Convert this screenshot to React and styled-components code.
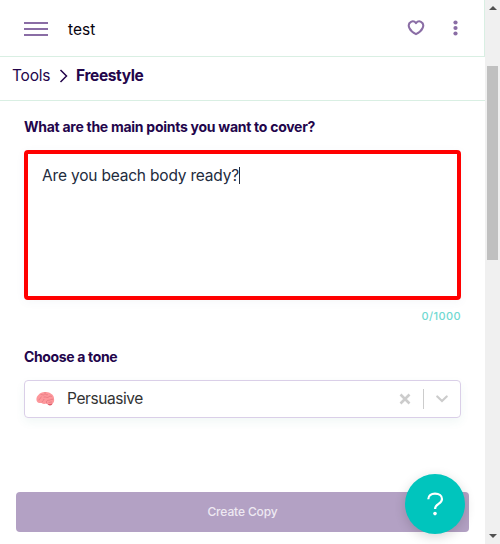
import React from "react";
import styled, { createGlobalStyle } from "styled-components";

const Global = createGlobalStyle`
  * { box-sizing: border-box; }
  html, body { margin: 0; padding: 0; background: #fff; overflow: hidden; }
  body { font-family: Inter, "Liberation Sans", sans-serif; color: #23054b; }
  button { font-family: inherit; border: 0; padding: 0; background: none; }
  svg { display: block; flex: none; }
`;

const Window = styled.div`
  position: relative;
  display: flex;
  width: 500px;
  height: 544px;
  overflow: hidden;
`;
const Page = styled.main`
  width: 485px;
  display: flex;
  flex-direction: column;
`;
const Text = styled.span`
  display: block;
  white-space: nowrap;
  font-size: ${(p) => p.$size || 16}px;
  font-weight: ${(p) => p.$weight || 400};
  letter-spacing: ${(p) => p.$spacing || 0}px;
  line-height: 20px;
  color: ${(p) => p.$color || "inherit"};
`;
const Title = styled(Text)`
  padding-top: 2px;
`;
const Header = styled.header`
  display: flex;
  align-items: center;
  height: 57px;
  padding: 2px 26px 0 24px;
  border-right: 1px solid #d9efe3;
  border-bottom: 1px solid #d9efe3;
`;
const MenuButton = styled.button`
  margin-right: 20px;
`;
const HeaderActions = styled.div`
  display: flex;
  align-items: center;
  gap: 27px;
  margin-left: auto;
  height: 24px;
  margin-top: -3px;
`;
const Breadcrumb = styled.nav`
  display: flex;
  align-items: center;
  height: 44px;
  padding: 0 12px 5px;
  border-bottom: 1px solid #d9efe3;
`;
const Chevron = styled.svg`
  margin: 0 7px 0 10px;
`;
const CrumbLink = styled.div`
  width: 37px;
`;
const Form = styled.section`
  display: flex;
  flex-direction: column;
  padding: 16px 24px 0;
`;
const TextArea = styled.div`
  display: flex;
  align-items: flex-start;
  height: 150px;
  margin-top: 13px;
  padding: 12px 14px;
  border: 4px solid #f00;
  border-radius: 4px;
  box-shadow: 0 2px 10px rgba(80, 100, 140, 0.05);
`;
const Caret = styled.i`
  width: 1px;
  height: 17px;
  margin-top: 1px;
  background: #222b3d;
`;
const Counter = styled.div`
  display: flex;
  justify-content: flex-end;
  margin: 6px 0 21px;
`;
const Select = styled.div`
  display: flex;
  align-items: center;
  height: 38px;
  margin-top: 13px;
  padding: 0 12px 0 11px;
  border: 1px solid #dacfe8;
  border-radius: 4px;
  box-shadow: 0 4px 10px rgba(60, 140, 130, 0.07);
`;
const SelectValue = styled.div`
  margin-left: 12px;
  flex: 1;
`;
const Divider = styled.i`
  width: 1px;
  height: 20px;
  margin: 0 12px;
  background: #ccc;
`;
const Submit = styled.button`
  display: flex;
  align-items: center;
  justify-content: center;
  height: 40px;
  margin: auto 16px 12px;
  border-radius: 4px;
  background: #b3a1c4;
`;
const Scrollbar = styled.aside`
  display: flex;
  flex-direction: column;
  align-items: center;
  width: 15px;
  background: #f0f0f0;
`;
const Thumb = styled.div`
  width: 11px;
  height: 194px;
  margin-top: 56px;
  margin-bottom: auto;
  background: #c0c0c0;
`;
const Arrow = styled.svg`
  margin: ${(p) => (p.$down ? "0 0 6px" : "6px 0 0")};
`;
const Help = styled.button`
  position: absolute;
  right: 35px;
  bottom: 10px;
  display: grid;
  place-items: center;
  width: 60px;
  height: 60px;
  border-radius: 50%;
  background: #00c5bd;
  box-shadow: 0 3px 12px rgba(0, 0, 0, 0.16);
`;

const Brain = () => (
  <svg width="19" height="16" viewBox="0 0 19 16">
    <path d="M10 12.200c1.300.1 1.700 2.100 3.700 2.200 1.800.1 3-.9 2.700-2.500z" fill="#dd5a68" />
    <path d="M1 10.500C-.2 8.300.5 5.400 2.600 3.700 4.200 1.800 6.700.8 9 1c2.200-.4 4.700.3 6 1.800 2 1 3.200 3.100 3 5.200.6 2.300-.6 4.500-2.600 4.700-1.700.6-3.700.5-5-.2-1.800.8-3.600.5-4.900-.5-1.900.4-3.800-.2-4.500-1.500z" fill="#fd979b" />
    <path d="M3 9c.4-2 2-1.500 2.300-3M5 3.500c1.500 0 2 .9 3.300.3M9 1.500c-.3 2 1 2.500 2.500 2.300M8 6c2-.6 2.500 1 4 .3s1.900-1.600 3.400-1M6 11c.3-1.500 1.700-1 2-2.600M10.500 12c-.5-2 .6-2.800 2.400-2.800S15 7.900 17 8.200M13 11.500c1 .1 1.500-.7 2.500-.6" fill="none" stroke="#e57780" strokeWidth=".8" strokeLinecap="round" />
  </svg>
);

export default function App() {
  return (
    <Window>
      <Global />
      <Page>
        <Header>
          <MenuButton aria-label="Menu">
            <svg width="24" height="14" fill="#8a6da5">
              <path d="M0 0h24v2H0zM0 6h24v2H0zM0 12h24v2H0z" />
            </svg>
          </MenuButton>
          <Title $color="#07020d" $size={15.5}>test</Title>
          <HeaderActions>
            <svg width="18" height="16" viewBox="0 0 18 16" fill="none" stroke="#8a6da5" strokeWidth="2" strokeLinejoin="round">
              <path d="M9 3.200C7.600 1.300 5.600 1 4 1.800 1.800 3 1.300 5.700 2.500 8.200 3.600 10.500 6 12.700 9 14.200c3-1.500 5.400-3.700 6.500-6C16.700 5.700 16.200 3 14 1.800 12.400 1 10.400 1.300 9 3.200z" />
            </svg>
            <svg width="6" height="16" viewBox="0 0 6 16" fill="#8a6da5">
              <circle cx="3.500" cy="2.500" r="2.100" />
              <circle cx="3.500" cy="8" r="2.100" />
              <circle cx="3.500" cy="13.500" r="2.100" />
            </svg>
          </HeaderActions>
        </Header>
        <Breadcrumb>
          <CrumbLink><Text $size={15.5} $spacing={-0.2}>Tools</Text></CrumbLink>
          <Chevron width="10" height="14" viewBox="0 0 10 14" fill="none" stroke="#23054b" strokeWidth="1.500">
            <path d="M1.500 1l6 6-6 6" />
          </Chevron>
          <Text $size={15.5} $weight={700} $spacing={-0.36}>Freestyle</Text>
        </Breadcrumb>
        <Form>
          <Text $size={14} $weight={650} $spacing={-0.27}>What are the main points you want to cover?</Text>
          <TextArea>
            <Text $size={15.5} $color="#222b3d" $spacing={-0.19}>Are you beach body ready?</Text>
            <Caret />
          </TextArea>
          <Counter><Text $size={11} $weight={500} $spacing={0.4} $color="#70d9d2">0/1000</Text></Counter>
          <Text $size={14} $weight={650} $spacing={-0.35}>Choose a tone</Text>
          <Select>
            <Brain />
            <SelectValue><Text $size={15.5} $color="#333" $spacing={-0.43}>Persuasive</Text></SelectValue>
            <svg width="12" height="12" fill="none" stroke="#ccc" strokeWidth="2.600">
              <path d="M1.500 1.500l9 9m0-9l-9 9" />
            </svg>
            <Divider />
            <svg width="12" height="8" fill="none" stroke="#ccc" strokeWidth="2.200" strokeLinecap="round">
              <path d="M1.300 1.500L6 6l4.700-4.500" />
            </svg>
          </Select>
        </Form>
        <Submit><Text $size={12} $weight={500} $spacing={-0.12} $color="#eee9f2">Create Copy</Text></Submit>
      </Page>
      <Scrollbar>
        <Arrow width="8" height="4"><path d="M4 0l4 4H0z" fill="#505050" /></Arrow>
        <Thumb />
        <Arrow $down width="8" height="4"><path d="M0 0h8L4 4z" fill="#505050" /></Arrow>
      </Scrollbar>
      <Help aria-label="Help">
        <svg width="18" height="26" viewBox="0 0 18 26" fill="none" stroke="#fff" strokeWidth="2.200">
          <path d="M2.300 8.200C2.300 4.800 5.100 2.600 9 2.600c4.200 0 7 2.100 7 5.300 0 5.400-6.900 4.500-6.900 10" />
          <circle cx="9" cy="22.600" r="1.800" fill="#fff" stroke="none" />
        </svg>
      </Help>
    </Window>
  );
}
